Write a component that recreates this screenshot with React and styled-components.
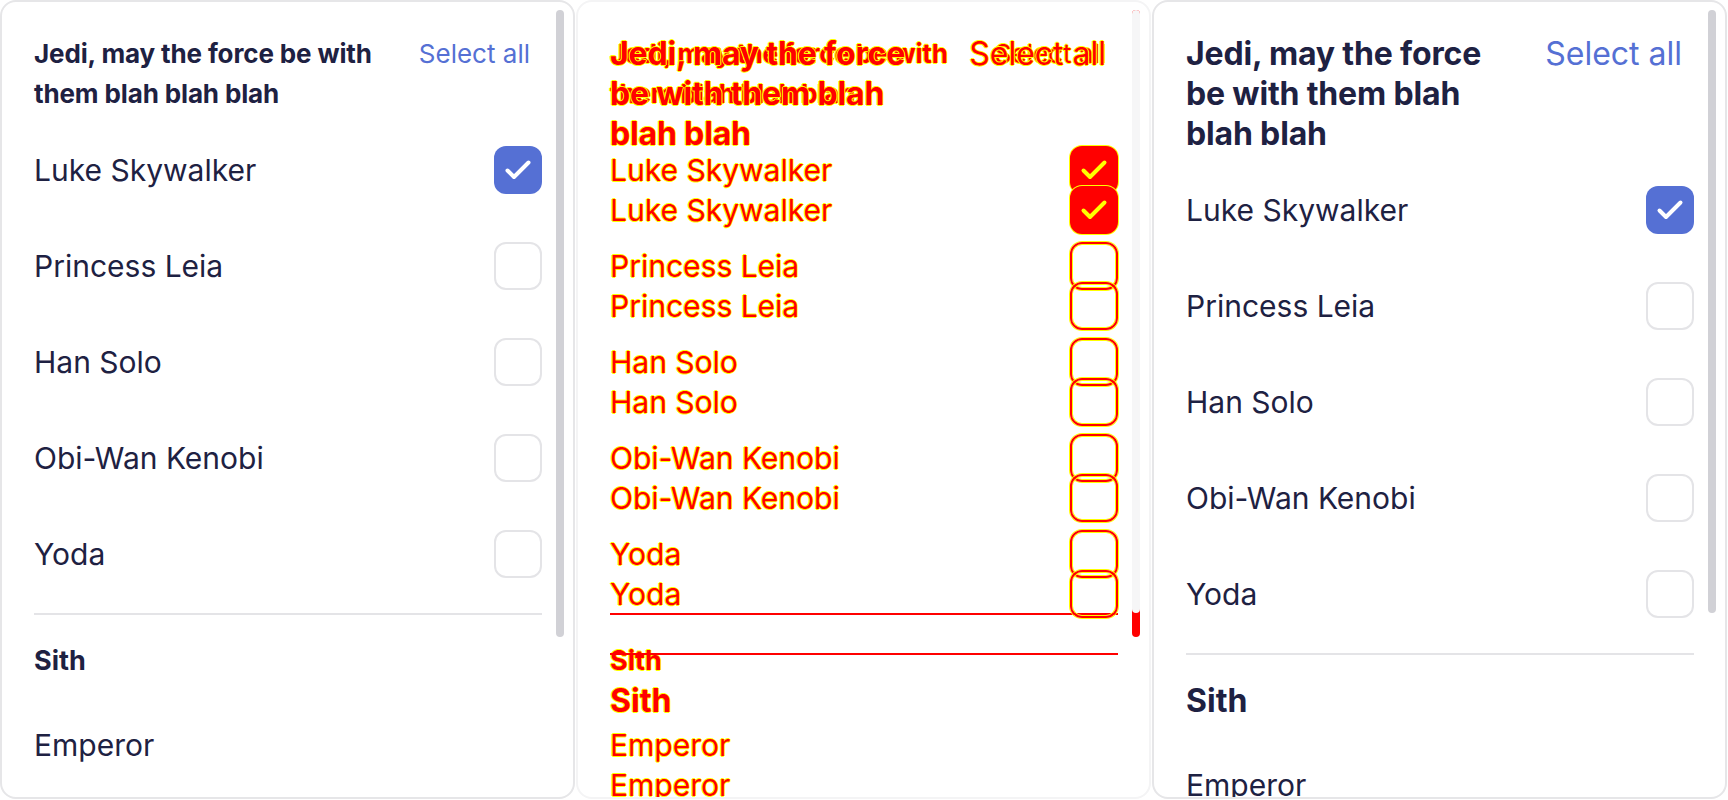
import React from 'react';
import styled, { createGlobalStyle, css } from 'styled-components';

const INK = '#1e2142';
const BLUE = '#5570d4';
const RED = '#ff0000';
const YELLOW = '#ffff00';

const GlobalStyle = createGlobalStyle`
  html, body {
    margin: 0;
    padding: 0;
    background: #fff;
  }
  body {
    font-family: Inter, "Noto Sans", sans-serif;
    -webkit-font-smoothing: antialiased;
  }
`;

const diffText = css`
  color: ${RED};
  text-shadow: 1px 0 ${YELLOW}, -1px 0 ${YELLOW}, 0 1px ${YELLOW}, 0 -1px ${YELLOW};
`;

const Page = styled.div`
  display: grid;
  grid-template-columns: repeat(3, 576px);
  height: 800px;
  overflow: hidden;
`;

const Card = styled.div`
  width: 575px;
  height: 799px;
  box-sizing: border-box;
  border: 2px solid ${(p) => (p.$faded ? '#f4f4f5' : '#e6e6e8')};
  border-radius: 16px;
  background: #fff;
  overflow: hidden;
  display: grid;
`;

const Layer = styled.div`
  grid-area: 1 / 1;
  display: flex;
  min-height: 0;
`;

const Content = styled.div`
  flex: 1;
  min-width: 0;
  padding: 32px 14px 0 32px;
`;

const Track = styled.div`
  width: 8px;
  margin: 8px 9px 0 0;
`;

const Thumb = styled.div`
  height: ${(p) => p.$h}px;
  border-radius: 4px;
  background: ${(p) => p.$color};
`;

const Header = styled.div`
  display: flex;
  align-items: flex-start;
  gap: 16px;
`;

const Heading = styled.h2`
  flex: 1;
  margin: 0;
  font-size: ${(p) => p.$size}px;
  line-height: 40px;
  font-weight: 700;
  letter-spacing: -0.005em;
  color: ${INK};
  ${(p) => p.$diff && diffText}
`;

const SelectAll = styled.button`
  border: 0;
  background: none;
  padding: 0 12px;
  font-family: inherit;
  font-size: ${(p) => p.$size}px;
  line-height: 40px;
  font-weight: 400;
  white-space: nowrap;
  color: ${BLUE};
  cursor: pointer;
  ${(p) => p.$diff && diffText}
`;

const List = styled.div`
  display: flex;
  flex-direction: column;
  margin-top: ${(p) => p.$top || 0}px;
`;

const Row = styled.label`
  display: flex;
  align-items: center;
  justify-content: space-between;
  height: 96px;
  cursor: pointer;
`;

const Name = styled.span`
  font-size: 30px;
  color: ${INK};
  ${(p) => p.$diff && diffText}
`;

const Box = styled.span`
  width: 48px;
  height: 48px;
  box-sizing: border-box;
  border-radius: 12px;
  display: flex;
  align-items: center;
  justify-content: center;
  flex-shrink: 0;
  ${(p) => {
    if (p.$diff) {
      return p.$checked
        ? css`background: ${RED}; box-shadow: 0 0 0 1px ${YELLOW};`
        : css`border: 2px solid ${RED}; box-shadow: 0 0 0 1px ${YELLOW}, inset 0 0 0 1px ${YELLOW};`;
    }
    return p.$checked
      ? css`background: ${BLUE};`
      : css`border: 2px solid #e4e4e7; background: #fff;`;
  }}
`;

const Divider = styled.div`
  height: 2px;
  margin-top: 11px;
  background: ${(p) => (p.$diff ? RED : '#e4e4e7')};
`;

const SectionTitle = styled.h3`
  margin: 26px 0 16px;
  font-size: ${(p) => p.$size}px;
  line-height: 40px;
  font-weight: 700;
  color: ${INK};
  ${(p) => p.$diff && diffText}
`;

const jedi = [
  { name: 'Luke Skywalker', checked: true },
  { name: 'Princess Leia' },
  { name: 'Han Solo' },
  { name: 'Obi-Wan Kenobi' },
  { name: 'Yoda' },
];

const sith = [{ name: 'Emperor', plain: true }];

const variants = {
  baseline: { heading: 26, selectAll: 26, section: 27, thumb: 627 },
  actual: { heading: 32, selectAll: 32, section: 32, thumb: 603 },
};

function Check({ color }) {
  return (
    <svg width="48" height="48" viewBox="0 0 48 48" fill="none">
      <path d="M13.5 24.5l6.5 6.5 14.5-14.5" stroke={color} strokeWidth="4" strokeLinecap="round" strokeLinejoin="round" />
    </svg>
  );
}

function Item({ name, checked, plain, diff }) {
  return (
    <Row>
      <Name $diff={diff}>{name}</Name>
      {!plain && (
        <Box $checked={checked} $diff={diff}>
          {checked && <Check color={diff ? YELLOW : '#fff'} />}
        </Box>
      )}
    </Row>
  );
}

function PanelBody({ variant, diff, thumbColor }) {
  const v = variants[variant];
  return (
    <Layer>
      <Content>
        <Header>
          <Heading $size={v.heading} $diff={diff}>
            Jedi, may the force be with them blah blah blah
          </Heading>
          <SelectAll $size={v.selectAll} $diff={diff}>Select all</SelectAll>
        </Header>
        <List $top={8}>
          {jedi.map((j) => (
            <Item key={j.name} {...j} diff={diff} />
          ))}
        </List>
        <Divider $diff={diff} />
        <SectionTitle $size={v.section} $diff={diff}>Sith</SectionTitle>
        <List>
          {sith.map((s) => (
            <Item key={s.name} {...s} diff={diff} />
          ))}
        </List>
      </Content>
      <Track>
        <Thumb $h={v.thumb} $color={thumbColor} />
      </Track>
    </Layer>
  );
}

export default function App() {
  return (
    <>
      <GlobalStyle />
      <Page>
        <Card>
          <PanelBody variant="baseline" thumbColor="#d1d1d6" />
        </Card>
        <Card $faded>
          <PanelBody variant="baseline" diff thumbColor={RED} />
          <PanelBody variant="actual" diff thumbColor="#f6f6f7" />
        </Card>
        <Card>
          <PanelBody variant="actual" thumbColor="#d1d1d6" />
        </Card>
      </Page>
    </>
  );
}
